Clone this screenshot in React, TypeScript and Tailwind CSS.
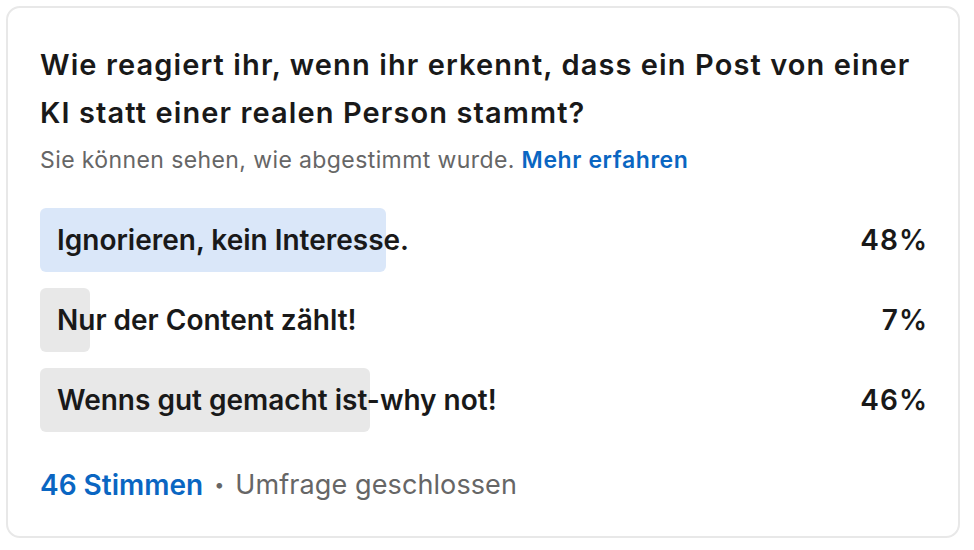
import React from 'react';

interface PollOption {
  label: string;
  percent: number;
  barWidth: string;
  selected?: boolean;
}

const options: PollOption[] = [
  { label: 'Ignorieren, kein Interesse.', percent: 48, barWidth: 'w-[346px]', selected: true },
  { label: 'Nur der Content zählt!', percent: 7, barWidth: 'w-[50px]' },
  { label: 'Wenns gut gemacht ist-why not!', percent: 46, barWidth: 'w-[330px]' },
];

const App: React.FC = () => {
  return (
    <div className="min-h-screen bg-white p-[6px] font-['Inter','Liberation_Sans',sans-serif]">
      <div className="w-[954px] h-[532px] rounded-[14px] border-2 border-[#e8e8e8] bg-white px-8 pt-[33px]">
        <h2 className="text-[29px] leading-[48px] font-semibold text-[#191919] tracking-[1.1px]">
          Wie reagiert ihr, wenn ihr erkennt, dass ein Post von einer KI statt einer realen Person stammt?
        </h2>
        <p className="mt-[9px] text-[23px] leading-[28px] text-[#666666] tracking-[0.4px]">
          Sie können sehen, wie abgestimmt wurde.{' '}
          <a className="font-semibold text-[#0a66c2] tracking-[0.6px]">Mehr erfahren</a>
        </p>

        <ul className="mt-[34px] flex flex-col gap-4">
          {options.map((o) => (
            <li key={o.label} className="relative h-16 flex items-center justify-between">
              <div
                className={`absolute inset-y-0 left-0 rounded-md ${o.barWidth} ${
                  o.selected ? 'bg-[#dae7f9]' : 'bg-[#e8e8e8]'
                }`}
              />
              <span className="relative pl-[17px] text-[28px] font-semibold text-[#191919]">{o.label}</span>
              <span className="relative -mr-[2px] text-[28px] font-semibold text-[#191919] tracking-[1px]">
                {o.percent}%
              </span>
            </li>
          ))}
        </ul>

        <div className="mt-[37px] flex items-center leading-8">
          <a className="text-[28px] font-semibold text-[#0a66c2]">46 Stimmen</a>
          <span className="mx-[11px] text-[#666666] text-[18px]">•</span>
          <span className="text-[27px] text-[#666666] tracking-[0.1px]">Umfrage geschlossen</span>
        </div>
      </div>
    </div>
  );
};

export default App;
